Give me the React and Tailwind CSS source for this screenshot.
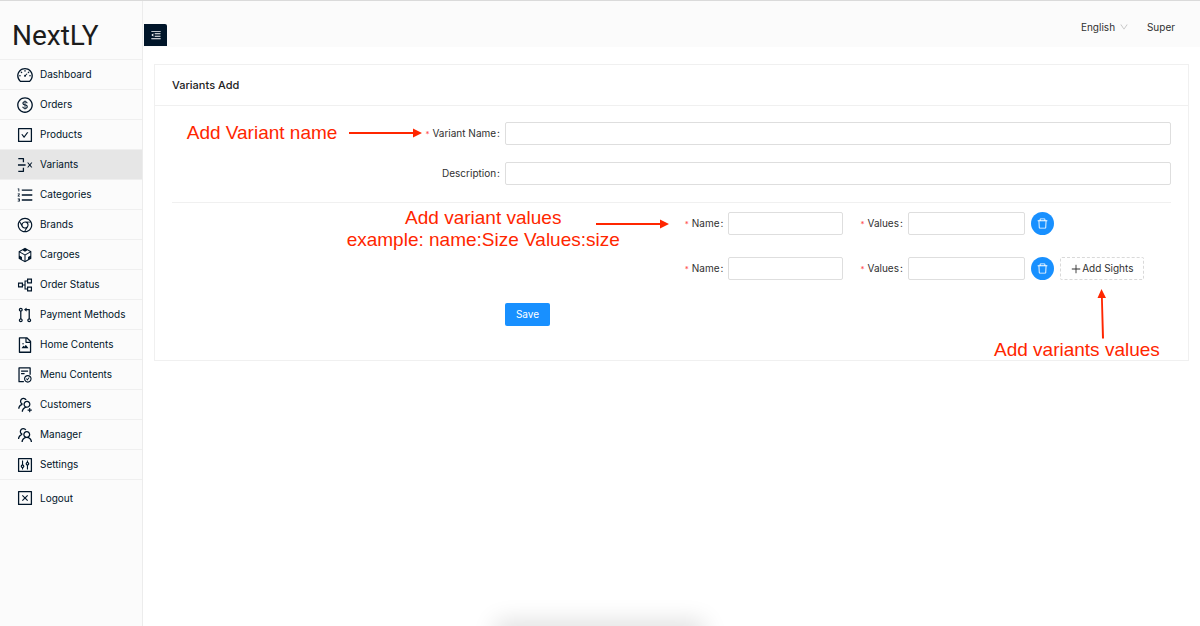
import {
  AiOutlineCheckSquare,
  AiOutlineChrome,
  AiOutlineCloseSquare,
  AiOutlineCodeSandbox,
  AiOutlineControl,
  AiOutlineDashboard,
  AiOutlineDelete,
  AiOutlineDeleteRow,
  AiOutlineDollarCircle,
  AiOutlineDown,
  AiOutlineFileDone,
  AiOutlineFileImage,
  AiOutlineMenuFold,
  AiOutlineOrderedList,
  AiOutlinePartition,
  AiOutlinePlus,
  AiOutlinePullRequest,
  AiOutlineTeam,
  AiOutlineUsergroupAdd,
} from "react-icons/ai";

const menu = [
  { label: "Dashboard", Icon: AiOutlineDashboard },
  { label: "Orders", Icon: AiOutlineDollarCircle },
  { label: "Products", Icon: AiOutlineCheckSquare },
  { label: "Variants", Icon: AiOutlineDeleteRow, active: true },
  { label: "Categories", Icon: AiOutlineOrderedList },
  { label: "Brands", Icon: AiOutlineChrome },
  { label: "Cargoes", Icon: AiOutlineCodeSandbox },
  { label: "Order Status", Icon: AiOutlinePartition },
  { label: "Payment Methods", Icon: AiOutlinePullRequest },
  { label: "Home Contents", Icon: AiOutlineFileImage },
  { label: "Menu Contents", Icon: AiOutlineFileDone },
  { label: "Customers", Icon: AiOutlineUsergroupAdd },
  { label: "Manager", Icon: AiOutlineTeam },
  { label: "Settings", Icon: AiOutlineControl },
];

const inputClass =
  "h-[23px] rounded-xs border border-[#dedede] bg-white px-2 text-[10px] outline-none focus:border-[#1890ff]";

function Sidebar() {
  return (
    <aside className="w-[143px] shrink-0 border-r border-[#ececec] bg-[#fbfbfb]">
      <div className="flex h-[58px] items-center pt-3 pl-3 font-['Roboto',sans-serif] text-[28px] text-[#1c1c1c]">
        NextLY
      </div>
      <nav className="text-[10px] text-[#001529]">
        <ul>
          {menu.map(({ label, Icon, active }) => (
            <li key={label} className="border-t border-[#efefef]">
              <a
                href="#"
                className={
                  active
                    ? "flex h-[29px] items-center gap-[6px] bg-[#e6e6e6] pl-4"
                    : "flex h-[29px] items-center gap-[6px] pl-4"
                }
              >
                <Icon className="size-[18px]" />
                {label}
              </a>
            </li>
          ))}
          <li className="border-t border-[#efefef]">
            <a href="#" className="flex h-9 items-center gap-[6px] pl-4">
              <AiOutlineCloseSquare className="size-[18px]" />
              Logout
            </a>
          </li>
        </ul>
      </nav>
    </aside>
  );
}

function Header() {
  return (
    <header className="flex h-[46px] items-center justify-between bg-[#fbfbfb] pr-[25px] pl-px">
      <button
        type="button"
        aria-label="Collapse menu"
        className="mt-[22px] flex h-[22px] w-[23px] items-center justify-center rounded-tr-xs bg-[#001529] text-white"
      >
        <AiOutlineMenuFold className="size-3" />
      </button>
      <div className="flex items-center gap-[18px] pt-[6px] text-[10px] text-[#303030]">
        <label className="flex items-center">
          <select aria-label="Language" className="w-[38px] appearance-none bg-transparent outline-none">
            <option>English</option>
          </select>
          <AiOutlineDown className="size-[10px] text-[#bfbfbf]" />
        </label>
        <a href="#">Super</a>
      </div>
    </header>
  );
}

function Label({ htmlFor, required, children }) {
  return (
    <label htmlFor={htmlFor} className="flex items-center whitespace-nowrap">
      {required && <span className="mr-[3px] text-[8px] text-[#ff4d4f]">*</span>}
      {children}
      <span className="ml-px">:</span>
    </label>
  );
}

function RightArrow({ className }) {
  return (
    <svg viewBox="0 0 73 10" className={className} fill="#ff2600" aria-hidden="true">
      <path d="M0 4h64V0.500L73 5L64 9.500V6H0z" />
    </svg>
  );
}

function ValueRow({ id, children }) {
  return (
    <div className="relative ml-[27%] flex items-center">
      <Label htmlFor={`name-${id}`} required>
        Name
      </Label>
      <input id={`name-${id}`} className={`${inputClass} ml-[5px] w-[115px]`} />
      <div className="ml-[17px] flex items-center">
        <Label htmlFor={`values-${id}`} required>
          Values
        </Label>
        <input id={`values-${id}`} className={`${inputClass} ml-[5px] w-[117px]`} />
      </div>
      <button
        type="button"
        aria-label="Delete value"
        className="ml-[6px] flex size-[23px] items-center justify-center rounded-full bg-[#1890ff] text-white"
      >
        <AiOutlineDelete className="size-[13px]" />
      </button>
      {children}
    </div>
  );
}

export default function App() {
  return (
    <div className="relative flex min-h-screen overflow-hidden border-t border-[#dadada] bg-white font-['Inter',sans-serif]">
      <Sidebar />
      <div className="min-w-0 flex-1">
        <Header />
        <main className="mt-[17px] mr-[11px] ml-[11px] border border-[#f0f0f0]">
          <h1 className="flex h-[41px] items-center border-b border-[#f0f0f0] px-[17px] text-[11px] font-medium text-[#222]">
            Variants Add
          </h1>
          <form className="px-[17px] pt-4 pb-[34px] text-[10px] text-[#303030]">
            <div className="grid grid-cols-[1fr_2fr] gap-y-[17px]">
              <div className="flex items-center justify-end pr-[5px]">
                <div className="relative">
                  <Label htmlFor="variant-name" required>
                    Variant Name
                  </Label>
                  <div className="absolute right-full bottom-0 flex items-center gap-3 pr-[3px] leading-4 whitespace-nowrap text-[#ff2600]">
                    <span className="font-['Liberation_Sans',sans-serif] text-[19px]">
                      Add Variant name
                    </span>
                    <RightArrow className="h-[10px] w-[73px]" />
                  </div>
                </div>
              </div>
              <input id="variant-name" className={inputClass} />
              <div className="flex items-center justify-end pr-[5px]">
                <Label htmlFor="description">Description</Label>
              </div>
              <input id="description" className={inputClass} />
            </div>
            <hr className="mt-[17px] mb-[9px] border-[#f0f0f0]" />
            <div className="grid grid-cols-[1fr_2fr]">
              <div className="col-start-2 flex flex-col gap-[22px]">
                <ValueRow id="1">
                  <div className="absolute top-[-5px] right-full flex items-start pr-4 text-[#ff2600]">
                    <p className="text-center font-['Liberation_Sans',sans-serif] text-[19px] leading-[22px] whitespace-nowrap">
                      Add variant values
                      <br />
                      example: name:Size Values:size
                    </p>
                    <RightArrow className="mt-3 -ml-6 h-[10px] w-[73px]" />
                  </div>
                </ValueRow>
                <ValueRow id="2">
                  <div className="relative ml-[6px]">
                    <button
                      type="button"
                      className="flex h-[23px] w-[84px] items-center justify-center rounded-xs border border-dashed border-[#d9d9d9] bg-white whitespace-nowrap"
                    >
                      <AiOutlinePlus className="size-3" />
                      Add Sights
                    </button>
                    <div className="absolute top-full right-[-16px] pt-[9px] text-[#ff2600]">
                      <svg viewBox="0 0 10 50" className="ml-[103px] h-[50px] w-[10px]" fill="#ff2600" aria-hidden="true">
                        <path d="M4.500 0L9 9H5.800L7 49.500H5L4 9H0.500z" />
                      </svg>
                      <span className="font-['Liberation_Sans',sans-serif] text-[19px] leading-[22px] whitespace-nowrap">
                        Add variants values
                      </span>
                    </div>
                  </div>
                </ValueRow>
              </div>
              <div className="col-start-2 mt-[23px]">
                <button type="submit" className="h-[23px] w-[45px] rounded-xs bg-[#1890ff] text-white">
                  Save
                </button>
              </div>
            </div>
          </form>
        </main>
      </div>
      <div className="absolute -bottom-4 left-1/2 h-4 w-[200px] -translate-x-1/2 shadow-[0_0_24px_4px_rgba(0,0,0,0.14)]" />
    </div>
  );
}
